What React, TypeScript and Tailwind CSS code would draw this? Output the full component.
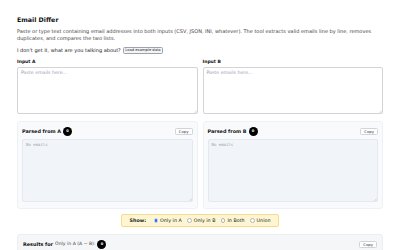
import React, { useState } from 'react';

const Badge: React.FC<{ n: number }> = ({ n }) => (
  <span className="inline-flex items-center justify-center w-[9px] h-[9px] rounded-full bg-black text-white text-[3.6px] font-bold leading-none">
    {n}
  </span>
);

const CopyButton: React.FC = () => (
  <button className="h-[7.5px] px-[3px] bg-white border border-[#d1d5db] rounded-[1.5px] text-[3.8px] leading-none text-[#333]">
    Copy
  </button>
);

const Grip: React.FC = () => (
  <svg className="absolute right-[1px] bottom-[1px] w-[3px] h-[3px]" viewBox="0 0 6 6">
    <path d="M5.5 1 L1 5.5 M5.5 3.5 L3.5 5.5" stroke="#9ca3af" strokeWidth="0.8" />
  </svg>
);

const InputBox: React.FC<{ label: string }> = ({ label }) => (
  <div className="flex flex-col">
    <label className="text-[4.5px] font-bold leading-[6px] text-[#111] mb-[2px]">{label}</label>
    <div className="relative">
      <textarea
        placeholder="Paste emails here..."
        className="block w-full h-[47px] resize-none bg-white border border-[#d4d4d8] rounded-[2px] px-[3px] py-[2px] text-[4.7px] leading-[6px] placeholder:text-[#9ca3af] outline-none"
      />
      <Grip />
    </div>
  </div>
);

const ParsedCard: React.FC<{ label: string }> = ({ label }) => (
  <div className="bg-[#f8fafc] border border-[#eef1f5] rounded-[3px] px-[4px] pt-[5px] pb-[6px]">
    <div className="flex items-center justify-between h-[9px]">
      <div className="flex items-center gap-[2px]">
        <span className="text-[4.9px] font-bold text-[#111]">{label}</span>
        <Badge n={0} />
      </div>
      <CopyButton />
    </div>
    <div className="relative mt-[3px]">
      <textarea
        readOnly
        placeholder="No emails"
        className="block w-full h-[63px] resize-none bg-[#f1f5f9] border border-[#e5e9ef] rounded-[2px] px-[3px] py-[2px] text-[4px] leading-[6px] font-['DejaVu_Sans_Mono',monospace] placeholder:text-[#a3a3a3] outline-none"
      />
      <Grip />
    </div>
  </div>
);

const Radio: React.FC<{ label: string; checked: boolean; onClick: () => void }> = ({ label, checked, onClick }) => (
  <label onClick={onClick} className="flex items-center gap-[2px] cursor-pointer">
    <span
      className={
        checked
          ? 'w-[4.5px] h-[4.5px] rounded-full bg-[#2563eb] border-[1px] border-[#bfd3fb]'
          : 'w-[4.5px] h-[4.5px] rounded-full bg-white border-[0.6px] border-[#b6b6b6]'
      }
    />
    <span className="text-[4.8px] text-[#222]">{label}</span>
  </label>
);

export default function App() {
  const [mode, setMode] = useState('a');
  const modes = [
    { id: 'a', label: 'Only in A' },
    { id: 'b', label: 'Only in B' },
    { id: 'both', label: 'In Both' },
    { id: 'union', label: 'Union' },
  ];

  return (
    <div className="min-h-screen bg-white font-['DejaVu_Sans',sans-serif] text-[#222]">
      <div className="px-[17px] pt-[15px]">
        <h1 className="text-[6.3px] font-bold leading-[9px] text-[#111]">Email Differ</h1>
        <p className="mt-[4px] text-[5px] leading-[7px] text-[#444]">
          Paste or type text containing email addresses into both inputs (CSV, JSON, INI, whatever). The tool extracts valid emails line by line, removes duplicates, and compares the two lists.
        </p>
        <div className="mt-[4.5px] flex items-center gap-[2px] h-[8px]">
          <span className="text-[5px] text-[#222]">I don't get it, what are you talking about?</span>
          <button className="h-[7.5px] px-[1.5px] bg-[#f3f4f6] border border-[#9ca3af] rounded-[1.5px] text-[3.7px] leading-none text-[#222]">
            Load example data
          </button>
        </div>

        <div className="mt-[4.5px] grid grid-cols-2 gap-x-[5px]">
          <InputBox label="Input A" />
          <InputBox label="Input B" />
        </div>

        <div className="mt-[7px] grid grid-cols-2 gap-x-[5px]">
          <ParsedCard label="Parsed from A" />
          <ParsedCard label="Parsed from B" />
        </div>

        <div className="mt-[5px] flex justify-center">
          <div className="flex items-center gap-[5.5px] h-[13px] px-[8px] bg-[#fef6d2] border border-[#f6dc8a] rounded-[2px]">
            <span className="text-[4.8px] font-bold text-[#222] mr-[2px]">Show:</span>
            {modes.map((m) => (
              <Radio key={m.id} label={m.label} checked={mode === m.id} onClick={() => setMode(m.id)} />
            ))}
          </div>
        </div>

        <div className="mt-[7px] bg-[#f5f6f8] border border-[#eceef1] rounded-[3px] px-[5px] pt-[5px] pb-[6px]">
          <div className="flex items-center justify-between h-[9px]">
            <div className="flex items-center gap-[2px]">
              <span className="text-[4.9px] font-bold text-[#111]">Results for</span>
              <span className="text-[4.6px] text-[#444]">Only in A (A − B):</span>
              <Badge n={0} />
            </div>
            <CopyButton />
          </div>
        </div>
      </div>
    </div>
  );
}
